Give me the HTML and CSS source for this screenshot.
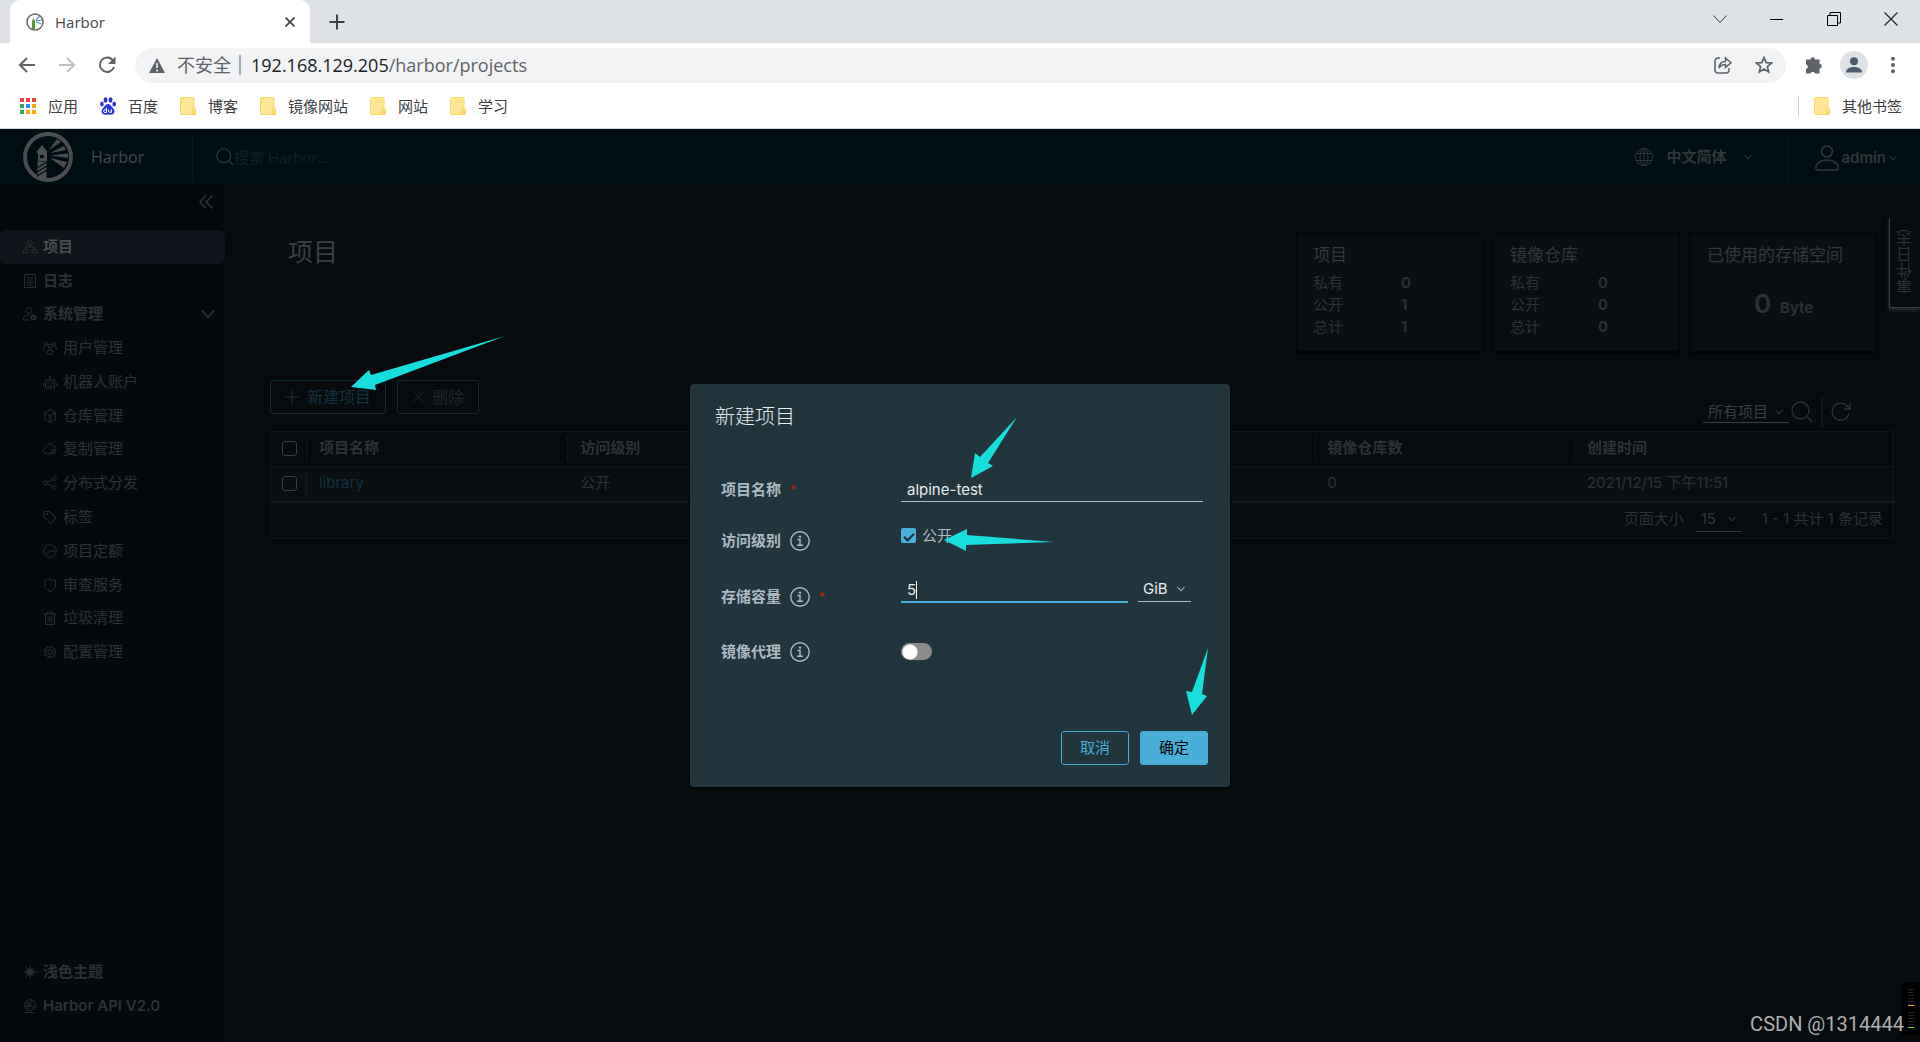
FILE: index.html
```html
<!DOCTYPE html>
<html lang="zh-CN">
<head>
<meta charset="utf-8">
<title>Harbor</title>
<link rel="stylesheet" href="styles.css">
</head>
<body>
<svg class="defs" aria-hidden="true">
  <symbol id="folder" viewBox="0 0 16 18"><path d="M1.500.5h11.500a1 1 0 0 1 1 1V12l1.500 1v3.500a1 1 0 0 1-1 1h-13a1 1 0 0 1-1-1v-15a1 1 0 0 1 1-1z" fill="#ffe594" stroke="#f8d863"/><path d="M12.500 17v-4l1-1.500 2 1V17z" fill="#ffe27a" stroke="#f2cb45" stroke-width=".8"/></symbol>
  <symbol id="caret" viewBox="0 0 10 10"><path d="M1.500 3 5 6.800 8.500 3" fill="none" stroke="currentColor" stroke-width="1.100"/></symbol>
  <symbol id="info" viewBox="0 0 20 20"><g fill="none" stroke="currentColor" stroke-width="1.400"><circle cx="10" cy="10" r="9.200"/><path d="M7.500 8.500H10V14M7 14.300h6"/></g><circle cx="10" cy="5.600" r="1.200" fill="currentColor"/></symbol>
  <symbol id="magnifier" viewBox="0 0 22 22"><g fill="none" stroke="currentColor" stroke-width="1.300"><circle cx="9.500" cy="9.500" r="8.500"/><path d="m16.500 16 4.500 5"/></g></symbol>
</svg>

<div class="tabstrip">
  <div class="tab">
    <svg class="favicon" viewBox="0 0 18 18"><circle cx="9" cy="9" r="8" fill="#fff" stroke="#666" stroke-width="1.500"/><path d="M6 16V8l1.500-3L9 8v8z" fill="#60932e"/><path d="m10 7 4-4M10 8l6-1M10 9l5 2" stroke="#5b92cc" stroke-width="1.200"/></svg>
    <span class="tab-title">Harbor</span>
    <button class="plain" aria-label="关闭标签页"><svg width="10" height="10" viewBox="0 0 10 10"><path d="m.5.5 9 9m0-9-9 9" stroke="#3c4043" stroke-width="1.600"/></svg></button>
  </div>
  <button class="plain newtab" aria-label="新标签页"><svg width="16" height="16" viewBox="0 0 16 16"><path d="M8 .5v15M.5 8h15" stroke="#3c4043" stroke-width="2"/></svg></button>
  <div class="window-controls">
    <button class="plain" aria-label="搜索标签页"><svg width="14" height="14" viewBox="0 0 14 14"><path d="m.5 3.500 6.500 7 6.500-7" fill="none" stroke="#333"/></svg></button>
    <button class="plain" aria-label="最小化"><svg width="14" height="14" viewBox="0 0 14 14"><path d="M0 7.500h13" stroke="#000"/></svg></button>
    <button class="plain" aria-label="还原"><svg width="14" height="14" viewBox="0 0 14 14"><path d="M.5 3.500h10v10h-10zM3 3V.5h10.500V11H11" fill="none" stroke="#000"/></svg></button>
    <button class="plain" aria-label="关闭"><svg width="14" height="14" viewBox="0 0 14 14"><path d="m.5.5 13 13m0-13-13 13" stroke="#222" stroke-width="1.200"/></svg></button>
  </div>
</div>

<div class="toolbar">
  <button class="plain" aria-label="后退"><svg width="18" height="18" viewBox="0 0 18 18"><path d="M17 9H2m7-7L2 9l7 7" fill="none" stroke="#5f6368" stroke-width="2"/></svg></button>
  <button class="plain" aria-label="前进"><svg width="18" height="18" viewBox="0 0 18 18"><path d="M1 9h15M9 2l7 7-7 7" fill="none" stroke="#bdc1c6" stroke-width="2"/></svg></button>
  <button class="plain" aria-label="重新加载"><svg width="18" height="18" viewBox="0 0 18 18"><path d="M15 4.500A7.200 7.200 0 1 0 16 11" fill="none" stroke="#5f6368" stroke-width="2"/><path d="M17.500.5V8H10z" fill="#5f6368"/></svg></button>
  <div class="omnibox">
    <svg width="16" height="15" viewBox="0 0 16 15"><path d="m8 0 8 15H0z" fill="#5f6368"/><path d="M8 5v5m0 1.500v2" stroke="#f1f3f4" stroke-width="1.600"/></svg>
    <span class="insecure">不安全</span>
    <span class="url"><b>192.168.129.205</b>/harbor/projects</span>
    <button class="plain share" aria-label="分享"><svg width="18" height="18" viewBox="0 0 18 18"><g fill="none" stroke="#5f6368" stroke-width="1.500"><path d="M6 2H4a3 3 0 0 0-3 3v9a3 3 0 0 0 3 3h8a3 3 0 0 0 3-3v-2"/><path d="M5 12c.3-4.500 3-6.500 6.500-6.500V2L17 6.800l-5.500 4.500V8.500C8.500 8.500 6.500 9.500 5 12z"/></g></svg></button>
    <button class="plain" aria-label="收藏"><svg width="18" height="18" viewBox="0 0 18 18"><path d="m9 1.500 2.100 5.100 5.500.4-4.200 3.600 1.300 5.400L9 13.100 4.300 16l1.300-5.400L1.400 7l5.500-.4z" fill="none" stroke="#5f6368" stroke-width="1.700"/></svg></button>
  </div>
  <button class="plain ext" aria-label="扩展程序"><svg width="18" height="18" viewBox="0 0 18 18"><path d="M1 3.500h4.500a2.200 2.200 0 0 1 4.400 0H14.500V8a2.200 2.200 0 0 1 0 4.500V17.500h-4.500a2.300 2.300 0 0 0-4.500 0H1V13a2.300 2.300 0 0 0 0-4.500z" fill="#5f6368"/></svg></button>
  <button class="plain avatar" aria-label="用户"><svg width="28" height="28" viewBox="0 0 28 28"><circle cx="14" cy="14" r="14" fill="#dee1e6"/><circle cx="14" cy="10.300" r="4" fill="#4f5b70"/><path d="M6 21.500c0-4 4-5.500 8-5.500s8 1.500 8 5.500z" fill="#4f5b70"/></svg></button>
  <button class="plain" aria-label="菜单"><svg width="18" height="18" viewBox="0 0 18 18" fill="#5f6368"><circle cx="9" cy="2.800" r="2"/><circle cx="9" cy="9" r="2"/><circle cx="9" cy="15.200" r="2"/></svg></button>
</div>

<nav class="bookmarks" aria-label="书签">
  <a href="#"><svg width="16" height="18" viewBox="0 0 16 18"><path d="M0 1h4v4H0zM6 1h4v4H6zM12 1h4v4h-4z" fill="#ea4335"/><path d="M0 7h4v4H0zM0 13h4v4H0z" fill="#34a853"/><path d="M6 7h4v4H6z" fill="#2d8cf0"/><path d="M12 7h4v4h-4zM6 13h4v4H6zM12 13h4v4h-4z" fill="#fba904"/></svg>应用</a>
  <a href="#"><svg width="16" height="18" viewBox="0 0 16 18" fill="#2932e1"><ellipse cx="5.600" cy="3" rx="1.900" ry="2.800"/><ellipse cx="10.600" cy="3" rx="1.900" ry="2.800"/><ellipse cx="1.900" cy="7" rx="1.800" ry="2.500"/><ellipse cx="14.200" cy="7" rx="1.800" ry="2.500"/><path d="M8 7c2 0 3 2 4.500 3.500S15 14 14 16s-3 1.800-6 1.400c-3 .4-5 .6-6-1.400s0-4 1.500-5.500S6 7 8 7z"/><path d="M6.500 10.500V15.500H5a1.300 1.300 0 0 1 0-2.800h1.500M8.500 12.500V14c0 2 2.800 2 2.800 0v-1.500 3.300" fill="none" stroke="#fff"/></svg>百度</a>
  <a href="#"><svg width="16" height="18"><use href="#folder"/></svg>博客</a>
  <a href="#"><svg width="16" height="18"><use href="#folder"/></svg>镜像网站</a>
  <a href="#"><svg width="16" height="18"><use href="#folder"/></svg>网站</a>
  <a href="#"><svg width="16" height="18"><use href="#folder"/></svg>学习</a>
  <a href="#" class="other"><svg width="16" height="18"><use href="#folder"/></svg>其他书签</a>
</nav>

<div class="app">
  <header class="header">
    <svg class="logo" width="50" height="50" viewBox="0 0 50 50"><circle cx="25" cy="25" r="23" fill="none" stroke="#4b4d4e" stroke-width="4"/><g fill="#4b4d4e"><path d="m19 13 5 6v2H14v-2zM15 21h2v8h-2zM21 21h3v8h-3zM17 21h4v2h-4zM17 26h4v3h-4z"/><path d="m26 18 8-11 4 3zM27 21l14-7 2 4zM27 23.500l18-2v4.500zM27 26l17 4-3 6z"/></g><path d="M14.500 29.500h9V49l-9-3z" fill="#4b4d4e"/><path d="m14 36 10-6m-10 10 10-6m-10 10 10-6" stroke="#000e14" stroke-width="1.200"/></svg>
    <span class="brand">Harbor</span>
    <label class="search"><svg width="18" height="18"><use href="#magnifier"/></svg><input type="text" placeholder="搜索 Harbor..." aria-label="搜索 Harbor"></label>
    <button class="plain lang"><svg width="18" height="18" viewBox="0 0 18 18"><g fill="none" stroke="currentColor"><circle cx="9" cy="9" r="8.500"/><ellipse cx="9" cy="9" rx="4" ry="8.500"/><path d="M9 .5v17M2 5.500h14M2 12.500h14"/></g></svg><span>中文简体</span><svg width="10" height="10"><use href="#caret"/></svg></button>
    <button class="plain user"><svg width="24" height="26" viewBox="0 0 24 26"><g fill="none" stroke="currentColor" stroke-width="1.600"><circle cx="12" cy="6.500" r="5.500"/><path d="M2 25q-1 0-1-1v-3c2-4 6-6 11-6s9 2 11 6v3q0 1-1 1z"/></g></svg><span>admin</span><svg width="10" height="10"><use href="#caret"/></svg></button>
  </header>

  <div class="body">
    <aside class="sidebar">
      <div class="collapse"><button class="plain" aria-label="收起"><svg width="14" height="14" viewBox="0 0 14 14"><path d="M7 .5.800 7 7 13.500M13.500.5 7.300 7l6.200 6.500" fill="none" stroke="currentColor" stroke-width="1.300"/></svg></button></div>
      <nav class="menu">
        <a href="#" class="active"><svg viewBox="0 0 14 14"><path d="M5 1h4v3.500H5zM.5 9.500h4.500V13H.5zM9 9.500h4.500V13H9zM7 4.500V7M2.500 9V7h9v2"/></svg>项目</a>
        <a href="#"><svg viewBox="0 0 14 14"><path d="M1.500.5h11v13h-11zM4 3.500h6M4 6h6M4 8.500h6M4 11h6"/></svg>日志</a>
        <a href="#"><svg viewBox="0 0 14 14"><circle cx="6" cy="3.500" r="2.800"/><path d="M7 13H.5v-2.500C2 8.500 4 8 7 8"/><circle cx="10.500" cy="10.500" r="2" stroke-width="2"/></svg>系统管理<svg class="expand" viewBox="1 1 8 8"><use href="#caret" width="10" height="10"/></svg></a>
        <a href="#" class="child"><svg viewBox="0 0 14 14"><circle cx="7" cy="5" r="2"/><circle cx="3" cy="3" r="1.600"/><circle cx="11" cy="3" r="1.600"/><path d="M4 13V10q3-3 6 0v3zM.5 9V7l2-1.300M13.500 9V7l-2-1.300"/></svg>用户管理</a>
        <a href="#" class="child"><svg viewBox="0 0 14 14"><path d="M2.500 5h9v8h-9zM7 5V2M.5 8v3M13.500 8v3M5 11h4"/><circle cx="7" cy="1.500" r=".8"/><circle cx="5" cy="8" r=".5"/><circle cx="9" cy="8" r=".5"/></svg>机器人账户</a>
        <a href="#" class="child"><svg viewBox="0 0 14 14"><path d="m7 .7 5.500 3v6.600l-5.500 3-5.500-3V3.700zM1.500 3.700 7 7l5.500-3.300M7 7v6.300"/></svg>仓库管理</a>
        <a href="#" class="child"><svg viewBox="0 0 14 14"><path d="M12 11.500H3a2.500 2.500 0 0 1-.3-5C3 3 5 2 7 2s3 1 3.500 2.500c2 .2 3 1.500 3 2.500M7 8h6l-1.500-1.500M13 10H8l1.500 1.500"/></svg>复制管理</a>
        <a href="#" class="child"><svg viewBox="0 0 14 14"><circle cx="2.500" cy="7" r="2"/><circle cx="11.500" cy="2.500" r="1.800"/><circle cx="11.500" cy="11.500" r="1.800"/><path d="m4.300 6 5.500-2.700M4.300 8l5.500 2.700"/></svg>分布式分发</a>
        <a href="#" class="child"><svg viewBox="0 0 14 14"><path d="M1 1.500h5.500L13 8l-5 5.500L1 7z"/><circle cx="4" cy="4" r=".6"/></svg>标签</a>
        <a href="#" class="child"><svg viewBox="0 0 14 14"><circle cx="7" cy="7" r="6.300"/><path d="m2.500 11.500 4-4.500h7"/></svg>项目定额</a>
        <a href="#" class="child"><svg viewBox="0 0 14 14"><path d="M7 .7c2 1.300 4 1.800 5.500 1.800V8c0 2-2 4-5.500 5.500C3.500 12 1.500 10 1.500 8V2.500C3 2.500 5 2 7 .7z"/></svg>审查服务</a>
        <a href="#" class="child"><svg viewBox="0 0 14 14"><path d="M1 3h12M4.500 3V1h5v2M2.500 3v10.500h9V3M5 5.500v6M7 5.500v6M9 5.500v6"/></svg>垃圾清理</a>
        <a href="#" class="child"><svg viewBox="0 0 14 14"><circle cx="7" cy="7" r="2.300"/><circle cx="7" cy="7" r="5"/><circle cx="7" cy="7" r="6" stroke-dasharray="2.300 2.400"/></svg>配置管理</a>
      </nav>
      <nav class="menu menu-bottom">
        <a href="#"><svg viewBox="0 0 14 14"><circle cx="7" cy="7" r="3.300" fill="currentColor"/><path d="M7 0v3M7 11v3M0 7h3M11 7h3M2 2l2 2M10 10l2 2M12 2l-2 2M4 10l-2 2"/></svg>浅色主题</a>
        <a href="#"><svg viewBox="0 0 14 14"><circle cx="7" cy="6" r="5.300"/><path d="M2.500 13.500h9M3 3l8 6M4 10l5-9M2 7l5 0"/></svg>Harbor API V2.0</a>
      </nav>
    </aside>

    <main class="content">
      <div class="top">
        <h1>项目</h1>
        <section class="card"><h2>项目</h2><dl><dt>私有</dt><dd>0</dd><dt>公开</dt><dd>1</dd><dt>总计</dt><dd>1</dd></dl></section>
        <section class="card"><h2>镜像仓库</h2><dl><dt>私有</dt><dd>0</dd><dt>公开</dt><dd>0</dd><dt>总计</dt><dd>0</dd></dl></section>
        <section class="card"><h2>已使用的存储空间</h2><p class="usage"><span>0</span>Byte</p></section>
      </div>
      <div class="actions">
        <button class="btn create"><svg width="14" height="14" viewBox="0 0 14 14"><path d="M7 0v14M0 7h14" stroke="currentColor"/></svg>新建项目</button>
        <button class="btn remove" disabled><svg width="12" height="12" viewBox="0 0 12 12"><path d="m.5.5 11 11m0-11-11 11" stroke="currentColor"/></svg>删除</button>
        <div class="filters">
          <span class="select filter"><select aria-label="项目筛选"><option>所有项目</option></select><svg width="10" height="10"><use href="#caret"/></svg></span>
          <button class="plain" aria-label="搜索"><svg width="22" height="22"><use href="#magnifier"/></svg></button>
          <button class="plain refresh" aria-label="刷新"><svg width="20" height="20" viewBox="0 0 20 20"><path d="M18 11.500a8.500 8.500 0 1 1-2-7.500l3 3M19 1v6h-6" fill="none" stroke="currentColor" stroke-width="1.300"/></svg></button>
        </div>
        <svg class="arrow arrow-create" width="155" height="56" viewBox="350 335 155 56"><path d="m351 387 18-17 2 5 134-39-130 49 1 5z"/></svg>
      </div>
      <div class="grid">
        <table>
          <colgroup><col class="c-check"><col class="c-name"><col class="c-access"><col class="c-count"><col class="c-time"></colgroup>
          <thead><tr><th><input type="checkbox" aria-label="全选"></th><th>项目名称</th><th>访问级别</th><th>镜像仓库数</th><th>创建时间</th></tr></thead>
          <tbody><tr><td><input type="checkbox" aria-label="选择 library"></td><td><a href="#">library</a></td><td>公开</td><td>0</td><td>2021/12/15 下午11:51</td></tr></tbody>
        </table>
        <div class="pager">
          <label for="size">页面大小</label>
          <span class="select size"><select id="size"><option>15</option></select><svg width="10" height="10"><use href="#caret"/></svg></span>
          <span>1 - 1 共计 1 条记录</span>
        </div>
      </div>
    </main>
  </div>

  <button class="plain events">事件日志</button>

  <div class="overlay">
    <form class="modal" role="dialog" aria-labelledby="dlg">
      <h3 id="dlg">新建项目</h3>
      <div class="field f-name">
        <div class="label"><label for="name">项目名称</label><span class="req">*</span></div>
        <input class="text" id="name" type="text" value="alpine-test">
      </div>
      <div class="field f-access">
        <div class="label"><label for="public">访问级别</label><svg width="20" height="20"><use href="#info"/></svg></div>
        <label class="check"><input id="public" type="checkbox" checked>公开</label>
      </div>
      <div class="field f-quota">
        <div class="label"><label for="quota">存储容量</label><svg width="20" height="20"><use href="#info"/></svg><span class="req">*</span></div>
        <div class="quota"><input class="text focused" id="quota" type="text" value="5"><i class="cursor"></i></div>
        <span class="select unit"><select aria-label="单位"><option>GiB</option></select><svg width="10" height="10"><use href="#caret"/></svg></span>
      </div>
      <div class="field f-proxy">
        <div class="label"><label for="proxy">镜像代理</label><svg width="20" height="20"><use href="#info"/></svg></div>
        <input class="toggle" id="proxy" type="checkbox">
      </div>
      <div class="footer">
        <button type="button" class="btn cancel">取消</button>
        <button type="button" class="btn ok">确定</button>
      </div>
      <svg class="arrow arrow-name" width="46" height="61" viewBox="971 417 46 61"><path d="m971 478 4-25 5 4 37-40-29 46 5 3z"/></svg>
      <svg class="arrow arrow-public" width="110" height="22" viewBox="944 529 110 22"><path d="m944 540 23-11v6l87 7-88 3v6z"/></svg>
      <svg class="arrow arrow-ok" width="22" height="67" viewBox="1186 648 22 67"><path d="m1192 715-6-24 6 1 16-44-6 46 5 2z"/></svg>
    </form>
  </div>

  <div class="meter"><i class="bars amber"></i><i class="bars green"></i></div>
  <div class="watermark">CSDN @1314444</div>
</div>
</body>
</html>
```
FILE: styles.css
```css
* { box-sizing: border-box; }
body {
  margin: 0; min-height: 100vh; display: flex; flex-direction: column;
  font: 15px/20px Inter, "Noto Sans CJK SC", sans-serif; background: #fff;
}
h1, h2, h3, p, dl, dd { margin: 0; font-weight: 400; }
a { color: inherit; text-decoration: none; }
button, input, select { font: inherit; color: inherit; }
svg { display: block; flex: none; }
.defs { position: absolute; width: 0; height: 0; }
.plain { border: 0; padding: 0; background: none; display: flex; align-items: center; flex: none; }

/* browser chrome */
.tabstrip, .toolbar, .bookmarks, .brand, .search { font-family: "Open Sans", "Noto Sans CJK SC", sans-serif; }
.tabstrip { height: 43px; background: #dee1e6; display: flex; align-items: center; padding-left: 10px; }
.tab { width: 300px; height: 43px; border-radius: 10px 10px 0 0; background: #fff; display: flex; align-items: center; padding: 0 15px 0 16px; color: #45484c; }
.favicon { width: 18px; height: 18px; }
.tab-title { flex: 1; margin-left: 11px; }
.newtab { margin-left: 19px; }
.window-controls { margin-left: auto; display: flex; gap: 43px; padding-right: 22px; padding-bottom: 6px; }
.toolbar { height: 45px; display: flex; align-items: center; padding: 0 18px 1px; gap: 22px; }
.omnibox { flex: 1; height: 35px; margin: 0 3px 0 -3px; border-radius: 18px; background: #f1f3f4; display: flex; align-items: center; padding: 0 13px 0 14px; color: #5f6368; font-size: 18px; }
.insecure { margin-left: 12px; padding-right: 8px; border-right: 2px solid #a9abae; }
.url { margin-left: 10px; }
.url b { font-weight: 400; color: #202124; }
.share { margin-left: auto; margin-right: 23px; }
.ext { margin-left: -6px; }
.avatar { margin: 0 -6px 0 -5px; }
.bookmarks { height: 41px; display: flex; align-items: center; gap: 22px; padding: 0 18px 5px 20px; border-bottom: 1px solid #d5d7da; color: #3c4043; }
.bookmarks a { display: flex; align-items: center; gap: 12px; }
.bookmarks .other { margin-left: auto; padding-left: 15px; border-left: 1px solid #ccc; }

/* application */
.app { flex: 1; position: relative; display: flex; flex-direction: column; background: #070b0e; color: #2e3133; overflow: hidden; }
.header { height: 56px; background: #000e14; display: flex; align-items: center; padding-left: 23px; }
.brand { font-size: 16px; color: #46494b; width: 101px; margin-left: 18px; }
.search { flex: 1; height: 50px; border-left: 1px solid #06171e; display: flex; align-items: center; padding-left: 23px; color: #33393c; }
.search input { border: 0; background: none; padding: 0; width: 200px; outline: 0; }
.search input::placeholder { color: #121f25; opacity: 1; }
.lang, .user { font-weight: 600; color: #303538; }
.lang span { margin: 0 17px 0 13px; }
.user { height: 50px; margin: 2px 0 0 34px; padding: 0 22px 0 27px; border-left: 1px solid #06171e; }
.user span { margin: 0 2px; }
.body { flex: 1; display: flex; }

.sidebar { width: 225px; flex: none; background: #04090c; display: flex; flex-direction: column; padding-bottom: 19px; }
.collapse { height: 36px; border-bottom: 1px solid #070c0f; display: flex; justify-content: flex-end; padding: 0 12px 2px 0; margin-bottom: 9px; color: #34383b; }
.menu { display: grid; grid-auto-rows: 1fr; height: 439px; }
.menu a { display: flex; align-items: center; gap: 6px; padding: 0 10px 0 23px; border-radius: 6px; font-weight: 600; }
.menu svg { width: 14px; height: 14px; fill: none; stroke: currentColor; color: #2a2d2f; }
.menu .child { padding-left: 43px; font-weight: 400; }
.menu .active { background: #0e141a; color: #4a4d4f; }
.menu .expand { margin-left: auto; }
.menu-bottom { height: 68px; margin-top: auto; }

.content { flex: 1; min-width: 0; padding: 48px 26px 0 45px; }
.top { display: flex; gap: 10px; height: 121px; padding-right: 17px; }
h1 { flex: 1; font-size: 25px; line-height: 38px; padding-left: 18px; color: #3c3f41; }
.card { width: 187px; background: #090f11; border: 1px solid #030607; border-bottom-width: 3px; border-radius: 3px; padding: 9px 16px; }
.card h2 { font-size: 17px; line-height: 24px; color: #343739; }
.card dl { display: grid; grid-template-columns: 88px 1fr; line-height: 22px; margin-top: 5px; }
.card dd { font-weight: 600; }
.usage { text-align: center; font-weight: 600; margin-top: 21px; line-height: 32px; }
.usage span { font-size: 26px; margin-right: 9px; }
.actions { position: relative; display: flex; gap: 11px; margin-top: 26px; height: 34px; }
.btn { height: 34px; border: 1px solid; border-radius: 3px; background: none; display: flex; align-items: center; justify-content: center; padding: 0 14px; flex: none; }
.create, .remove { font-size: 16px; gap: 8px; }
.create { color: #142f3d; }
.remove { color: #202426; }
.filters { margin: 17px 43px -13px auto; display: flex; align-items: center; height: 30px; color: #2d3133; }
.select { position: relative; display: flex; align-items: center; border-bottom: 1px solid; }
.select select { appearance: none; border: 0; background: none; padding: 0 5px; width: 100%; outline: 0; }
.select svg { position: absolute; right: 5px; pointer-events: none; }
.filter { width: 86px; height: 21px; color: #3a3d3f; margin-right: 2px; }
.refresh { height: 30px; margin-left: 8px; padding-left: 8px; border-left: 2px solid #15191b; }
.grid { margin-top: 17px; border: 1px solid #12171a; border-radius: 3px; }
table { width: 100%; table-layout: fixed; border-collapse: collapse; }
.c-check { width: 36px; }
.c-name { width: 16.100%; }
.c-count { width: 16%; }
.c-time { width: 19.600%; }
th, td { height: 34px; padding: 0 12px 2px; text-align: left; font-weight: 400; }
th { font-weight: 600; }
th:not(:last-child) { background: linear-gradient(#14191b, #14191b) no-repeat right center / 1px 24px; }
th:first-child, td:first-child { padding: 0 0 0 11px; }
td:first-child { background: linear-gradient(#14191b, #14191b) no-repeat right center / 1px 24px; }
tbody tr { height: 36px; background: #090f11; border-top: 1px solid #12171a; border-bottom: 2px solid #12171a; }
td a { color: #122f3f; }
.grid input { appearance: none; display: block; width: 15px; height: 15px; margin: 0; border: 1px solid #3a3d3f; border-radius: 3px; }
.pager { height: 35px; display: flex; align-items: center; justify-content: flex-end; padding: 0 10px 3px 0; }
.size { width: 46px; height: 25px; margin: 0 20px 0 12px; color: #343739; }

.events { position: absolute; right: 0; top: 89px; width: 31px; height: 90px; writing-mode: vertical-rl; transform: rotate(180deg); justify-content: center; background: #070b0e; border-right: 1px solid #3a3d3f; border-top: 1px solid #3a3d3f; box-shadow: 0 -2px 4px #333; font-size: 16px; }

/* dialog */
.overlay { position: absolute; inset: 0; display: flex; align-items: center; justify-content: center; }
.modal { position: relative; width: 540px; background: #22343c; border-radius: 4px; box-shadow: 0 1px 3px #000; padding: 20px 22px 22px 25px; color: #acbac3; }
h3 { font-size: 20px; line-height: 26px; color: #e9ecef; font-weight: 300; }
.field { display: flex; padding-left: 6px; }
.label { width: 180px; height: 26px; display: flex; align-items: center; gap: 9px; font-weight: 600; margin-top: 1px; }
.req { color: #c92100; font-size: 12px; font-weight: 400; }
.text { width: 302px; height: 26px; border: 0; border-bottom: 1px solid #acbac3; background: none; padding: 2px 6px 0; color: #e9ecef; outline: 0; }
.f-name { margin-top: 46px; height: 49px; }
.f-access { height: 52px; padding-top: 2px; }
.check { display: flex; gap: 6px; height: 17px; align-items: center; }
.check input { appearance: none; width: 15px; height: 15px; margin: 0; border-radius: 2px; background: #49afd9; display: grid; place-items: center; }
.check input::after { content: ""; width: 8px; height: 4px; border: solid #1b2a32; border-width: 0 0 2px 2px; transform: rotate(-45deg); }
.f-quota { height: 60px; }
.quota { position: relative; height: 26px; }
.focused { display: block; width: 227px; border-bottom: 2px solid #49afd9; padding-top: 0; }
.cursor { position: absolute; left: 15px; top: 4px; width: 1px; height: 18px; background: #fff; }
.f-quota .label { margin-top: 7px; }
.unit { width: 53px; height: 25px; margin-left: 10px; color: #e9ecef; border-color: #acbac3; }
.unit svg { color: #acbac3; }
.toggle { appearance: none; width: 31px; height: 17px; margin: 6px 0 0; border-radius: 9px; background: radial-gradient(circle at 9px 9px, #fafafa 7px, #8c8c8c 8px); }
.f-proxy { height: 61px; }
.f-proxy .label { margin-top: 2px; }
.footer { display: flex; justify-content: flex-end; gap: 11px; margin-top: 33px; }
.cancel, .ok { width: 68px; border-color: #49afd9; color: #49afd9; }
.ok { background: #49afd9; color: #000; }

.arrow { position: absolute; fill: #17dedd; }
.arrow-create { left: 80px; top: -45px; }
.arrow-name { left: 281px; top: 33px; }
.arrow-public { left: 254px; top: 145px; }
.arrow-ok { left: 496px; top: 264px; }

.watermark { position: absolute; right: 16px; bottom: 6px; font: 20px/24px Roboto, sans-serif; color: #adafb0; }
.meter { position: absolute; right: 0; bottom: 7px; width: 18px; height: 53px; background: #000; border-radius: 3px 0 0 3px; padding: 7px 6px; display: flex; flex-direction: column; gap: 6px; }
.bars { height: 17px; border-bottom: 1px solid; background: repeating-linear-gradient(#222 0 1px, #000 1px 3px); }
.amber { border-color: #f0a030; }
.green { border-color: #7ee020; }
```
